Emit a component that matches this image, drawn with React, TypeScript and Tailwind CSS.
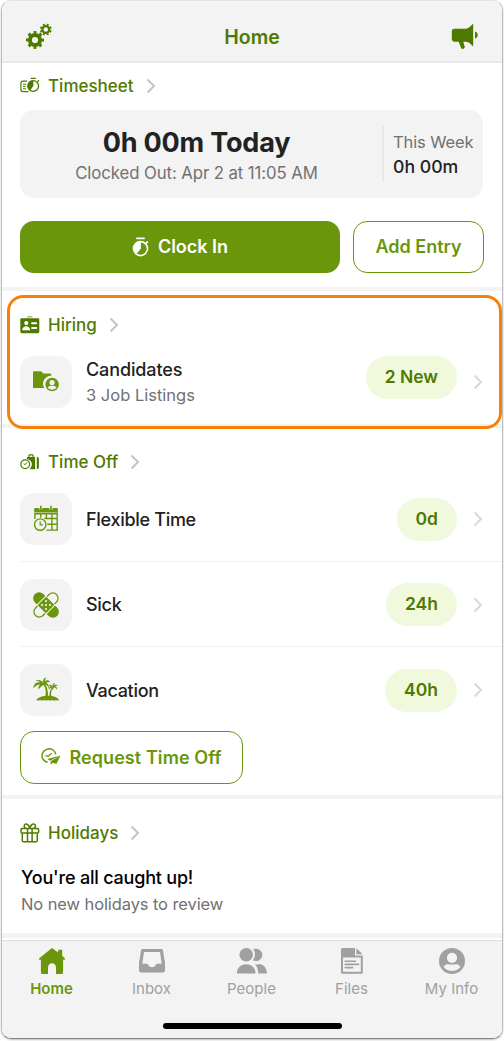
import React from 'react';

type IconProps = { className?: string };

interface Balance {
  id: string;
  label: string;
  amount: string;
  icon: React.ReactNode;
}

// ---------- Icons ----------

function GearsIcon() {
  return (
    <svg width="28" height="28" viewBox="0 0 28 28" fill="none" stroke="#4f7a00">
      <circle cx="10" cy="17" r="5.1" strokeWidth="4" />
      <circle cx="10" cy="17" r="7.7" strokeWidth="2.6" pathLength="16" strokeDasharray="0.95 1.05" strokeDashoffset="0.47" />
      <circle cx="20.8" cy="6.5" r="3.4" strokeWidth="2.3" />
      <circle cx="20.8" cy="6.5" r="5" strokeWidth="1.9" pathLength="16" strokeDasharray="1 1" strokeDashoffset="-0.5" />
    </svg>
  );
}

function MegaphoneIcon() {
  return (
    <svg width="28" height="28" viewBox="0 0 28 28" fill="#4f7a00">
      <path d="M3.2 5.8H14.5C17.5 5.8 20 3.1 22.2.6V23.6C20 21.2 17.8 18.8 15 18.7H12.3L13.7 23.6C14.3 25.9 10.8 26.7 10.1 25L7.7 18.7H3.2Q.8 18.7.8 16.3V8.2Q.8 5.8 3.2 5.8Z" />
      <path d="M24 8.6C27.6 9.2 27.6 15 24 15.6Z" />
    </svg>
  );
}

function StopwatchIcon({ className }: IconProps) {
  return (
    <svg className={className} width="17" height="20" viewBox="0 0 17 20" fill="none" stroke="currentColor">
      <path d="M4.9 1.3H12.1" strokeWidth="1.7" strokeLinecap="round" />
      <circle cx="8.5" cy="11.6" r="7" strokeWidth="1.6" />
      <path d="M13.4 6.6L15.3 5" strokeWidth="1.7" strokeLinecap="round" />
      <path d="M8.9 5V11.6L4.8 16.6C-.6 13 1.5 4.8 8.9 5Z" fill="currentColor" stroke="none" />
    </svg>
  );
}

function TimesheetIcon() {
  return (
    <svg width="20" height="20" viewBox="0 0 20 20" fill="none" stroke="currentColor">
      <path d="M7 5.2H3Q.9 5.2.9 7.2V13.6Q.9 15.6 3 15.6H8.4" strokeWidth="1.2" />
      <path d="M3 8.3H6M3 10.5H5.5M3 12.8H6" strokeWidth="1" />
      <circle cx="13.2" cy="10" r="5.4" strokeWidth="1.3" />
      <path d="M10.7 2.3H15.7M17.4 5.8L19 4.3" strokeWidth="1.3" />
      <path d="M13.4 4.4V10L10 14.6C5.6 11 7.8 4 13.4 4.4Z" fill="currentColor" stroke="none" />
    </svg>
  );
}

function HiringIcon() {
  return (
    <svg width="20" height="20" viewBox="0 0 20 20" fill="currentColor">
      <path d="M7 2.2Q7 1.5 7.8 1.5H11.8Q12.6 1.5 12.6 2.2Z" />
      <rect x=".3" y="3.2" width="19" height="15" rx="1.4" />
      <g fill="#fff">
        <circle cx="6.3" cy="8.1" r="2.1" />
        <path d="M2.2 15.2C2.3 9.8 10.1 9.8 10.2 15.2Z" />
        <rect x="11.2" y="7.2" width="5.8" height="2" rx=".6" />
        <rect x="11.2" y="11.9" width="5.8" height="2" rx=".6" />
      </g>
    </svg>
  );
}

function LuggageIcon() {
  return (
    <svg width="20" height="20" viewBox="0 0 20 20" fill="currentColor">
      <path d="M6.8 6.3Q6.8 5.1 8 5.1H8.4V3.3Q8.4 2.3 9.4 2.3H12.6Q13.6 2.3 13.6 3.3V5.1H15.1V17.3H9.6C13.8 12.9 11.7 7.4 6.8 7ZM9.6 3.5V5.1H12.4V3.5Z" fillRule="evenodd" />
      <path d="M16.8 5.1C18.4 5.1 18.9 5.9 18.9 7.3V15.1Q18.9 17.3 16.8 17.3Z" />
      <circle cx="5.2" cy="12.3" r="4.4" fill="none" stroke="currentColor" strokeWidth="1.2" />
      <path d="M5.2 12.6L7.1 10.4M5.2 12.6L3.8 11.9" fill="none" stroke="currentColor" strokeWidth="1" />
    </svg>
  );
}

function GiftIcon() {
  return (
    <svg width="20" height="20" viewBox="0 0 20 20" fill="none" stroke="currentColor" strokeWidth="1.5" strokeLinejoin="round">
      <rect x="1" y="5.4" width="17.6" height="4.5" rx="1" />
      <path d="M2.3 9.9V17.4Q2.3 18.7 3.6 18.7H16Q17.3 18.7 17.3 17.4V9.9" />
      <path d="M7.5 5.4V18.7M12.1 5.4V18.7" />
      <path d="M9.8 5.2C8.8 1.8 6.8.4 5.3 1.2C3.6 2.1 4.1 4 5.2 5.2M9.8 5.2C10.8 1.8 12.8.4 14.3 1.2C16 2.1 15.5 4 14.4 5.2" />
    </svg>
  );
}

function FolderPersonIcon() {
  return (
    <svg width="28" height="28" viewBox="0 0 28 28" fill="#6a960c">
      <path d="M2 3.2H8.5Q9.5 3.2 10.2 4.2L11.2 5.4H18Q19.5 5.4 19.5 7.2V7.4C12 8 9 15 12.4 20.1H1V4Q1 3.2 2 3.2Z" />
      <circle cx="20.1" cy="16.5" r="7.7" fill="#f3f3f3" />
      <circle cx="20.1" cy="16.5" r="6.7" />
      <circle cx="20.1" cy="14.6" r="2.6" fill="#f3f3f3" />
      <path d="M15.6 19.6C16.8 17.2 23.4 17.2 24.6 19.6C22.6 22.3 17.6 22.3 15.6 19.6Z" fill="#f3f3f3" />
    </svg>
  );
}

function CalendarClockIcon() {
  return (
    <svg width="28" height="28" viewBox="0 0 28 28" fill="none" stroke="#6a960c">
      <path d="M2.2 7.6V4.2Q2.2 3 3.4 3H24.7Q25.9 3 25.9 4.2V7.6Z" fill="#6a960c" stroke="none" />
      <path d="M8.9 1.4V4.4M19 1.4V4.4" stroke="#f3f3f3" strokeWidth="3.2" />
      <path d="M8.9 1.4V4.8M19 1.4V4.8" strokeWidth="1.6" strokeLinecap="round" />
      <path d="M2.9 8.8V14M25.2 7.6V25.1H14.4M2.2 8.8H25.9M8.7 8.8V13.5M14.4 8.8V14M19.9 8.8V25M12 13.5H25.2M15 19.3H25.2" strokeWidth="1.4" />
      <circle cx="8.2" cy="19.6" r="7.2" fill="#f3f3f3" stroke="none" />
      <circle cx="8.2" cy="19.6" r="5.7" strokeWidth="1.4" />
      <path d="M8.2 16.2V19.8H11" strokeWidth="1.2" />
    </svg>
  );
}

function BandageIcon() {
  return (
    <svg width="28" height="28" viewBox="0 0 28 28" fill="none">
      <g transform="rotate(-45 14 14)">
        <rect x="-.9" y="8.7" width="29.8" height="10.6" rx="5.3" stroke="#6a960c" strokeWidth="1.2" />
      </g>
      <g transform="rotate(45 14 14)">
        <rect x="-2.4" y="7.3" width="32.8" height="13.4" rx="6.7" fill="#f3f3f3" />
        <rect x="-1.7" y="8" width="31.4" height="12" rx="6" fill="#6a960c" />
        <path d="M7.7 7.5V20.5M20.3 7.5V20.5" stroke="#f3f3f3" strokeWidth="1.1" />
        <g fill="#f3f3f3">
          <circle cx="11.2" cy="11.2" r="1.1" />
          <circle cx="16.8" cy="11.2" r="1.1" />
          <circle cx="14" cy="14" r="1.1" />
          <circle cx="11.2" cy="16.8" r="1.1" />
          <circle cx="16.8" cy="16.8" r="1.1" />
        </g>
      </g>
    </svg>
  );
}

function PalmIcon() {
  return (
    <svg width="28" height="28" viewBox="0 0 28 28" fill="#6a960c">
      <path d="M4.4 24C7.3 18.7 23.6 18 27 24Q25.6 25 24 24Q22 25.2 20 24Q18 25.2 16 24Q14 25.2 12 24Q10 25.2 8 24Q6 25 4.4 24Z" />
      <path d="M12.8 8C15.5 11.5 16.2 15.5 16 20.2H13.4C14.2 15.5 13.8 12 11.4 8.4ZM21.2 11.5C19.2 14 18.9 17 19.2 20H17.4C17.4 16.5 18 13.5 20.2 11.2Z" />
      <path d="M11.4 7C9.3 3.9 6.3 2.9 3.5 5.1C6.2 5 7.3 5.5 8.5 6.4C4.7 5.6 1.7 7.6 1.2 12.3C3.6 10.1 5.6 8.8 8.3 8.6C6.6 9.9 6.2 11.6 6.7 13.6C8.4 11 10 9.5 12.1 8.8C13.8 8.4 15.7 9.6 16.8 12C17.4 9.2 16 7.4 13.9 6.9C15.4 6.2 16.9 5.9 18.4 6.3C16.8 3.9 14.4 3.8 12.7 5.3C13 3.8 13.6 2.5 14.6 1.7C12.5 1.5 11 3.2 10.9 5.5Z" />
      <path d="M20.7 10.6C19.7 8.4 18 8.4 16.8 9.4L19 10.3C17 10.7 16.5 12 16.8 13.6C18 12.1 19.2 11.5 20.6 11.4L19.9 14.2C21.1 13.3 21.7 12.4 21.8 11.4C23.5 11.3 24.4 12.3 25 13.8C25.6 12.1 24.5 10.7 22.9 10.3L26 9.3C24.5 8.3 23.2 8.4 22.2 9.3L22.6 6.8C21.1 7.4 20.5 8.6 20.7 10.6Z" />
    </svg>
  );
}

function RequestIcon() {
  return (
    <svg width="20" height="20" viewBox="0 0 20 20" fill="none" stroke="#6a960c">
      <path d="M6.6 15.2C2.5 14.3.3 10.9 1.2 7.2C2.4 2.5 8 .3 12 3C13.7 4.2 14.6 5.8 14.8 7.4" strokeWidth="1.4" />
      <path d="M4.6 8.2L6.9 9.5L10.7 6.2" strokeWidth="1.2" />
      <path d="M19.4 8.6L6.3 12L9 13.8Z" fill="#6a960c" stroke="none" />
      <path d="M19.4 8.6L9.7 14.2V17.8L11.9 15.7L15.4 17Z" fill="#6a960c" stroke="none" />
    </svg>
  );
}

function Chevron({ className }: IconProps) {
  return (
    <svg className={className} width="10" height="16" viewBox="0 0 10 16" fill="none" stroke="currentColor" strokeWidth="2">
      <path d="M1.6 1.5L8 8L1.6 14.5" />
    </svg>
  );
}

function HomeIcon() {
  return (
    <svg width="28" height="28" viewBox="0 0 28 28" fill="currentColor">
      <path d="M14 1L1 11.4Q.6 12.4 1.6 12.7L2.9 12.8V25.4Q2.9 26.9 4.4 26.9H10V20.5C10 14.8 18 14.8 18 20.5V26.9H23.6Q25.1 26.9 25.1 25.4V12.8L26.4 12.7Q27.4 12.4 27 11.4L24.2 8.8V2.8H20.2V5.6Z" />
    </svg>
  );
}

function InboxIcon() {
  return (
    <svg width="28" height="28" viewBox="0 0 28 28" fill="currentColor" fillRule="evenodd">
      <path d="M4.6 2H23.4Q24.8 2 25 3.4L27 16V23.6Q27 25.4 25.2 25.4H2.8Q1 25.4 1 23.6V16L3 3.4Q3.2 2 4.6 2ZM6 4.9L4.3 16.8H9.3C10.2 16.8 10.3 20.3 14 20.3C17.7 20.3 17.8 16.8 18.7 16.8H23.7L22 4.9Z" />
    </svg>
  );
}

function PeopleIcon() {
  return (
    <svg width="32" height="28" viewBox="0 0 32 28" fill="currentColor">
      <circle cx="10.2" cy="7.7" r="6.8" />
      <path d="M.9 26.4C.9 14.2 19.5 14.2 19.5 26.4Z" />
      <path d="M17.2 2C23.5.4 28.1 5.5 25.7 10.4C24 14 19.8 14.9 16.5 13.3C19.6 10.2 19.9 5.5 17.2 2Z" />
      <path d="M18 16.5Q20 18.6 22.7 17C27.5 17 30.8 20.7 30.8 26.4H22.2C22.2 22 21 19 18 16.5Z" />
    </svg>
  );
}

function FilesIcon() {
  return (
    <svg width="28" height="28" viewBox="0 0 28 28" fill="currentColor">
      <path d="M4.6 1H17V8.6H24.8V25.2Q24.8 26.8 23.2 26.8H4.6Q3 26.8 3 25.2V2.6Q3 1 4.6 1Z" />
      <path d="M18.4 1.2L24.6 7.3H18.4Z" />
      <rect x="5" y="10.5" width="17.8" height="14.3" fill="#f3f3f3" />
      <path d="M7.2 14.2H17.4M7.2 17.4H20.6M7.2 20.6H14.6" stroke="currentColor" strokeWidth="1.6" strokeLinecap="round" />
    </svg>
  );
}

function ProfileIcon() {
  return (
    <svg width="28" height="28" viewBox="0 0 28 28" fill="currentColor">
      <circle cx="14" cy="14" r="13" />
      <circle cx="14" cy="10.8" r="5.1" fill="#f3f3f3" />
      <path d="M5.4 20C7.5 16 11 17.5 14 17.5C17 17.5 20.5 16 22.6 20C18 25.4 10 25.4 5.4 20Z" fill="#f3f3f3" />
    </svg>
  );
}

// ---------- Building blocks ----------

interface HeadingProps {
  icon: React.ReactNode;
  title: string;
}

function SectionHeading({ icon, title }: HeadingProps) {
  return (
    <div className="flex h-6 items-center text-[#4f7a00]">
      {icon}
      <h2 className="ml-2 text-[17px] leading-6 font-medium whitespace-nowrap">{title}</h2>
      <Chevron className="ml-3 text-[#c4c4c4]" />
    </div>
  );
}

function Tile({ children }: { children: React.ReactNode }) {
  return (
    <div className="flex h-[52px] w-[52px] shrink-0 items-center justify-center rounded-[14px] bg-[#f3f3f3]">
      {children}
    </div>
  );
}

function Pill({ children }: { children: React.ReactNode }) {
  return (
    <span className="flex h-[43px] items-center rounded-full bg-[#f0f9dc] px-[19px] text-[17.5px] font-semibold whitespace-nowrap text-[#4f7a00]">
      {children}
    </span>
  );
}

const balances: Balance[] = [
  { id: 'flex', label: 'Flexible Time', amount: '0d', icon: <CalendarClockIcon /> },
  { id: 'sick', label: 'Sick', amount: '24h', icon: <BandageIcon /> },
  { id: 'vacation', label: 'Vacation', amount: '40h', icon: <PalmIcon /> },
];

const tabs = [
  { label: 'Home', icon: <HomeIcon />, active: true },
  { label: 'Inbox', icon: <InboxIcon /> },
  { label: 'People', icon: <PeopleIcon /> },
  { label: 'Files', icon: <FilesIcon /> },
  { label: 'My Info', icon: <ProfileIcon /> },
];

export default function App() {
  return (
    <div className="h-[1041px] w-[504px] overflow-hidden bg-white px-px font-['Inter','Liberation_Sans',sans-serif]">
      <div className="flex h-[1039px] flex-col overflow-hidden rounded-[10px] border border-t-[#e2e2e2] border-r-[#bdbdbd] border-b-[#858585] border-l-[#bdbdbd] bg-white shadow-[0_1px_2px_rgba(0,0,0,0.25)]">
        {/* Header */}
        <header className="flex h-[62px] shrink-0 items-center justify-between border-b-2 border-[#e9e9e9] bg-[#f3f3f3] px-[23px] pt-[11px]">
          <GearsIcon />
          <h1 className="pt-[2px] text-[19.5px] font-semibold text-[#4f7a00]">Home</h1>
          <MegaphoneIcon />
        </header>

        {/* Timesheet */}
        <section className="h-[224px] shrink-0 px-[18px] pt-[11px]">
          <SectionHeading icon={<TimesheetIcon />} title="Timesheet" />
          <div className="mt-[12px] flex h-[88px] w-[463px] items-center rounded-[14px] bg-[#f3f3f3]">
            <div className="flex w-[362px] flex-col items-center pt-[5px] pr-[9px] whitespace-nowrap">
              <p className="text-[27px] leading-8 font-bold tracking-[-0.2px] text-[#222]">0h 00m Today</p>
              <p className="text-[16.8px] leading-7 tracking-[-0.1px] text-[#717171]">Clocked Out: Apr 2 at 11:05 AM</p>
            </div>
            <div className="flex h-[56px] flex-col justify-center border-l-2 border-[#e8e8e8] pl-[9px] whitespace-nowrap">
              <p className="text-[16.5px] leading-[25px] tracking-[-0.1px] text-[#717171]">This Week</p>
              <p className="text-[17.7px] leading-[24px] font-medium text-[#222]">0h 00m</p>
            </div>
          </div>
          <div className="mt-[23px] flex gap-[13px]">
            <button className="flex h-[52px] w-[320px] items-center justify-center gap-[9px] rounded-[14px] bg-[#6a960c] text-[18px] font-semibold text-white">
              <StopwatchIcon />
              <span className="-mt-px">Clock In</span>
            </button>
            <button className="h-[52px] w-[131px] rounded-[14px] border border-[#6a960c] pb-px text-[18px] font-semibold whitespace-nowrap text-[#6a960c]">
              Add Entry
            </button>
          </div>
        </section>
        <div className="h-1 shrink-0 bg-[#f3f3f3]" />

        {/* Hiring, outlined by the callout */}
        <section className="relative h-[133px] shrink-0 pt-[22px] pl-[18px]">
          <div className="absolute top-1 right-0 left-[5px] z-10 h-[134px] rounded-2xl border-3 border-[#f98006]" />
          <SectionHeading icon={<HiringIcon />} title="Hiring" />
          <div className="mt-[19px] flex items-center">
            <Tile><FolderPersonIcon /></Tile>
            <div className="ml-[14px] flex-1">
              <p className="text-[18px] leading-[26px] font-medium tracking-[-0.12px] text-[#222]">Candidates</p>
              <p className="text-[16.5px] leading-6 text-[#717171]">3 Job Listings</p>
            </div>
            <div className="-mt-[9px]"><Pill>2 New</Pill></div>
            <Chevron className="mr-[19px] ml-4 text-[#d8d8d8]" />
          </div>
        </section>
        <div className="h-1 shrink-0 bg-[#f3f3f3]" />

        {/* Time off */}
        <section className="h-[367px] shrink-0 pt-[22px] pl-[18px]">
          <SectionHeading icon={<LuggageIcon />} title="Time Off" />
          <div className="mt-[2px]">
            {balances.map((b) => (
              <div key={b.id} className="flex h-[85.5px] items-center border-b border-[#f0f0f0] pt-[1.5px] last:border-transparent">
                <Tile>{b.icon}</Tile>
                <p className="ml-[14px] flex-1 text-[18px] font-medium tracking-[-0.3px] text-[#222]">{b.label}</p>
                <Pill>{b.amount}</Pill>
                <Chevron className="mr-[19px] ml-4 text-[#d8d8d8]" />
              </div>
            ))}
          </div>
          <button className="-mt-[2px] flex h-[53px] w-[223px] items-center justify-center gap-2 rounded-[14px] border border-[#6a960c] text-[18px] font-semibold tracking-[0.08px] whitespace-nowrap text-[#6a960c]">
            <RequestIcon />
            Request Time Off
          </button>
        </section>
        <div className="h-1 shrink-0 bg-[#f3f3f3]" />

        {/* Holidays */}
        <section className="h-[134px] shrink-0 px-[18px] pt-[22px]">
          <SectionHeading icon={<GiftIcon />} title="Holidays" />
          <p className="mt-[19px] ml-px text-[18px] leading-[27px] font-medium tracking-[-0.2px] text-black">You're all caught up!</p>
          <p className="ml-px text-[16.5px] leading-[27px] tracking-[-0.1px] text-[#717171]">No new holidays to review</p>
        </section>
        <div className="h-[5px] shrink-0 bg-[#f3f3f3]" />

        {/* Tab bar */}
        <nav className="mt-[2px] flex flex-1 flex-col items-center border-t border-[#dedede] bg-[#f3f3f3] pt-[6px]">
          <div className="-ml-px flex w-[500px]">
            {tabs.map((t) => (
              <div
                key={t.label}
                className={`flex w-[100px] flex-col items-center text-[15px] leading-[27px] ${
                  t.active ? 'font-semibold text-[#6a960c]' : 'text-[#a0a0a0]'
                }`}
              >
                {t.icon}
                <span>{t.label}</span>
              </div>
            ))}
          </div>
          <div className="mt-[21px] h-[6px] w-[179px] rounded-full bg-black" />
        </nav>
      </div>
    </div>
  );
}
